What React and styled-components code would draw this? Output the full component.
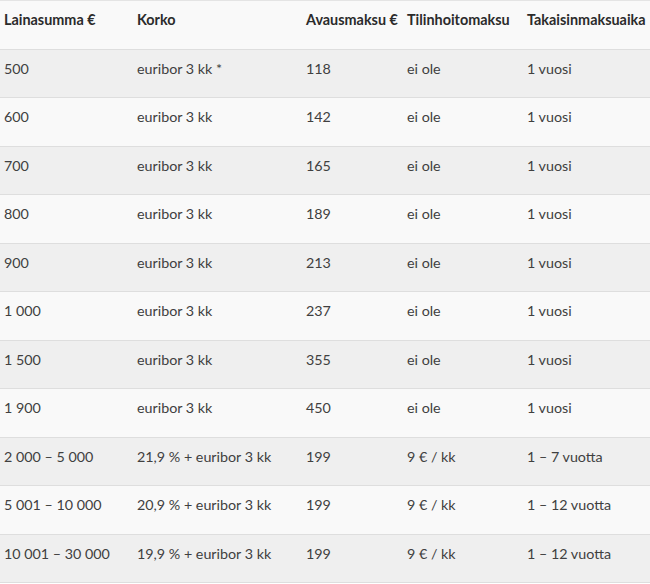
import styled, { createGlobalStyle } from "styled-components";

const GlobalStyle = createGlobalStyle`
  html, body {
    margin: 0;
    padding: 0;
    background: #ffffff;
  }
`;

const columns = "133px 169px 101px 120px 127px";

const rows = [
  ["500", "euribor 3 kk *", "118", "ei ole", "1 vuosi"],
  ["600", "euribor 3 kk", "142", "ei ole", "1 vuosi"],
  ["700", "euribor 3 kk", "165", "ei ole", "1 vuosi"],
  ["800", "euribor 3 kk", "189", "ei ole", "1 vuosi"],
  ["900", "euribor 3 kk", "213", "ei ole", "1 vuosi"],
  ["1 000", "euribor 3 kk", "237", "ei ole", "1 vuosi"],
  ["1 500", "euribor 3 kk", "355", "ei ole", "1 vuosi"],
  ["1 900", "euribor 3 kk", "450", "ei ole", "1 vuosi"],
  ["2 000 – 5 000", "21,9 % + euribor 3 kk", "199", "9 € / kk", "1 – 7 vuotta"],
  ["5 001 – 10 000", "20,9 % + euribor 3 kk", "199", "9 € / kk", "1 – 12 vuotta"],
  ["10 001 – 30 000", "19,9 % + euribor 3 kk", "199", "9 € / kk", "1 – 12 vuotta"],
];

const headers = [
  "Lainasumma €",
  "Korko",
  "Avausmaksu €",
  "Tilinhoitomaksu",
  "Takaisinmaksuaika",
];

const Table = styled.div`
  width: 650px;
  overflow: hidden;
  border-top: 1px solid #e4e4e4;
  font-family: Lato, "Open Sans", sans-serif;
`;

const Row = styled.div`
  display: grid;
  grid-template-columns: ${columns};
  height: 47.5px;
  border-bottom: 1px solid #dedede;
  background: ${(p) => (p.$shaded ? "#efefef" : "#f9f9f9")};
`;

const Cell = styled.div`
  padding: 9px 4px 0;
  font-size: 14.3px;
  line-height: 20px;
  color: #404040;
  white-space: nowrap;
`;

const HeadCell = styled(Cell)`
  font-weight: 700;
  font-size: 14.4px;
  color: #2b2b2b;
`;

export default function App() {
  return (
    <>
      <GlobalStyle />
      <Table>
        <Row>
          {headers.map((h) => (
            <HeadCell key={h}>{h}</HeadCell>
          ))}
        </Row>
        {rows.map((r, i) => (
          <Row key={i} $shaded={i % 2 === 0}>
            {r.map((c, j) => (
              <Cell key={j}>{c}</Cell>
            ))}
          </Row>
        ))}
      </Table>
    </>
  );
}
